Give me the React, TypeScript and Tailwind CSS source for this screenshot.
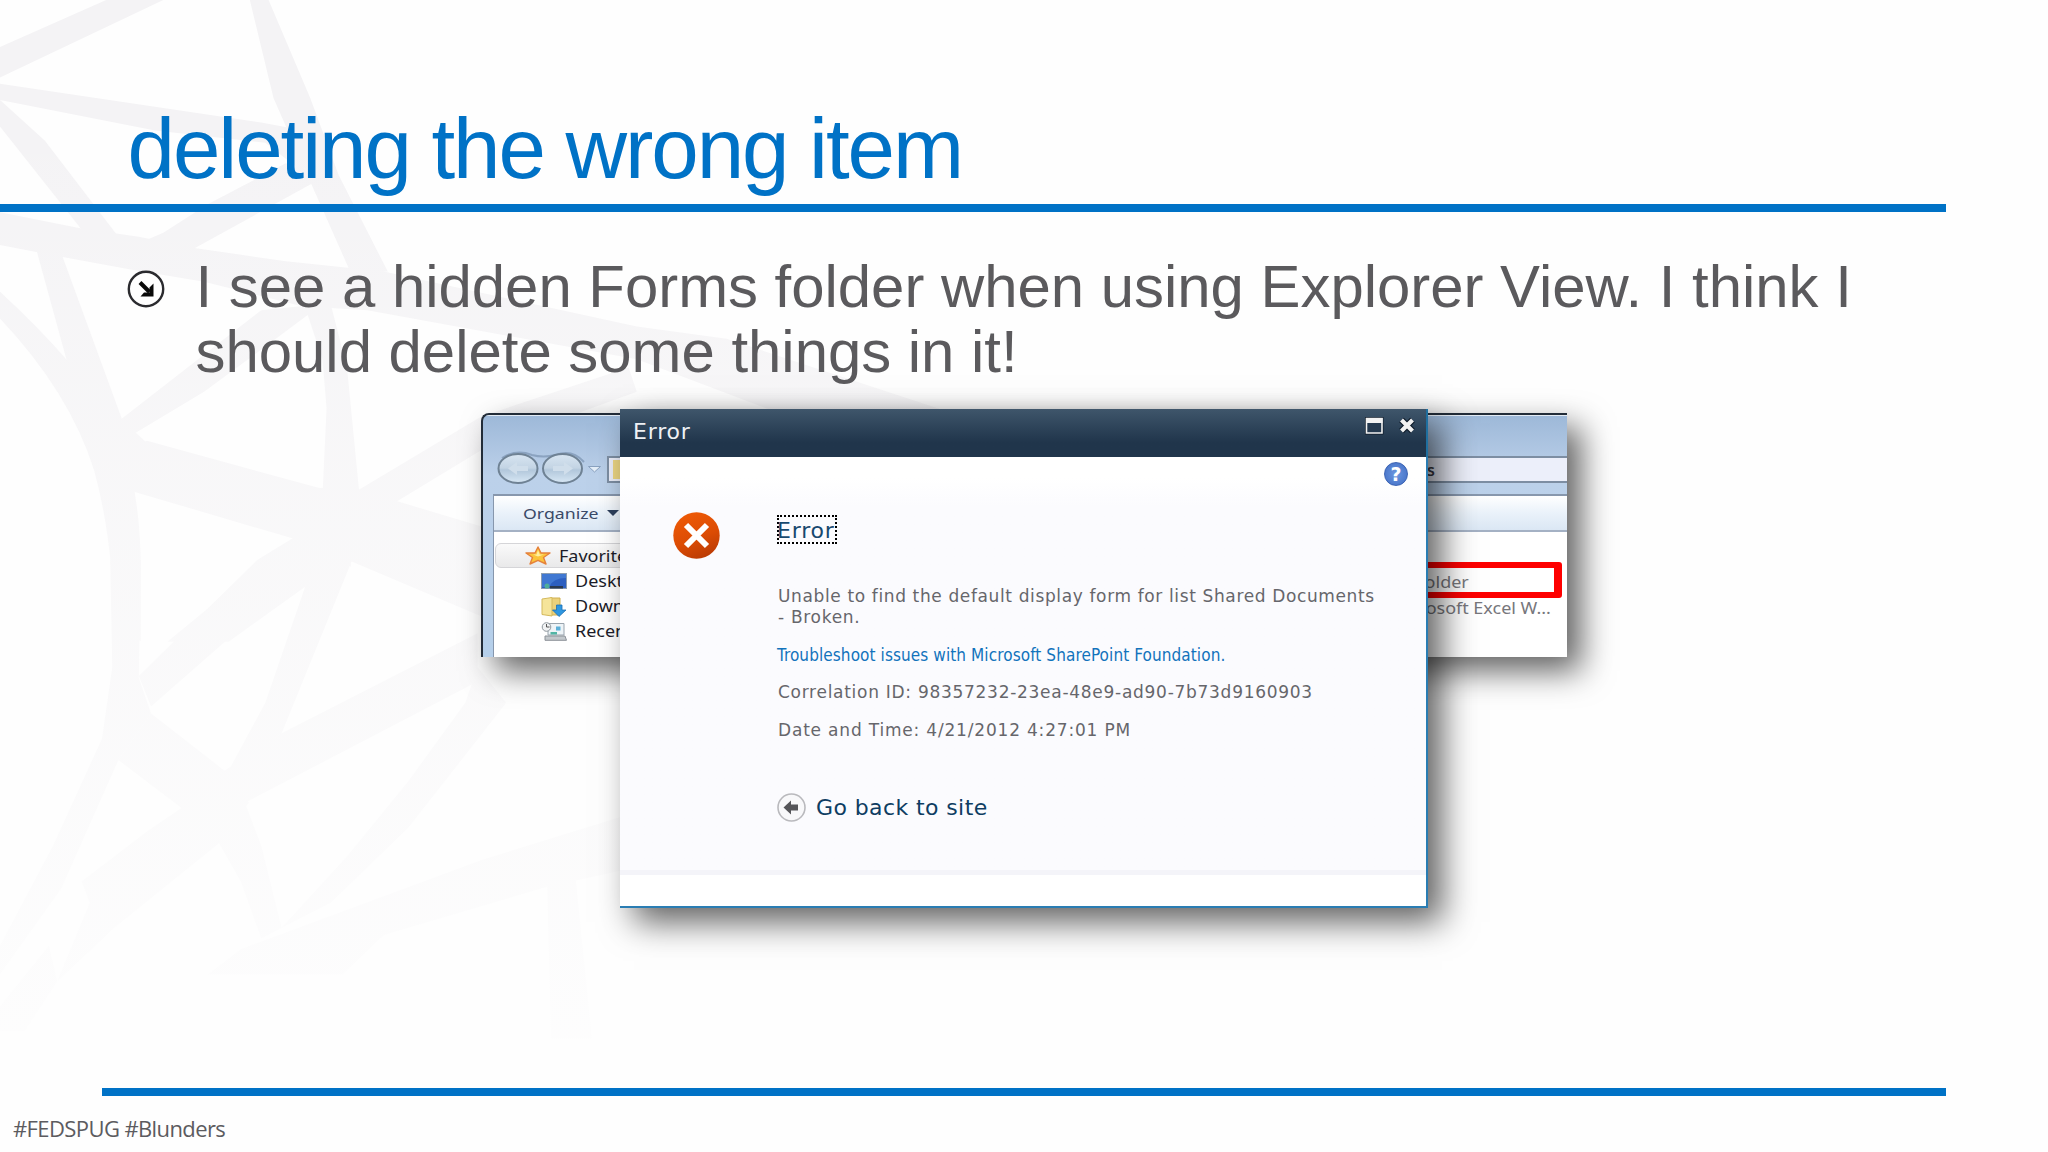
function WebBackdrop() {
  return (
    <svg className="absolute left-0 top-0" width="1000" height="1152" viewBox="0 0 1000 1152">
      <defs>
        <linearGradient id="fade" x1="0" y1="0" x2="0" y2="1">
          <stop offset="0.1" stopColor="#fefefe" stopOpacity="0" />
          <stop offset="0.3" stopColor="#fefefe" stopOpacity="0.25" />
          <stop offset="0.5" stopColor="#fefefe" stopOpacity="0.5" />
          <stop offset="0.7" stopColor="#fefefe" stopOpacity="0.72" />
          <stop offset="0.95" stopColor="#fefefe" stopOpacity="0.95" />
        </linearGradient>
      </defs>
      <g fill="#f4f3f5" transform="scale(0.4082)">
        <path d="M0 115 260 0H400L0 190Z" />
        <path d="M612 0H658L760 240 830 430 950 665 860 670 740 400 670 240Z" />
        <path d="M0 205 640 300 800 330 740 420 650 350 380 320 0 245Z" />
        <path d="M0 245 110 345 290 580 210 575 0 310Z" />
        <path d="M700 400 800 430 470 612 330 600 400 570 510 500Z" />
        <path d="M0 520 200 560 340 580 480 608 700 640 940 665 1560 800 1780 830 2312 1005H1890L1560 880 900 760 740 750 500 690 320 660 130 625 0 600Z" />
        <path d="M90 615 150 620 300 1030 360 1085 230 1150 190 980Z" />
        <path d="M0 715Q190 890 290 1050 345 1200 345 1400V1570H280Q280 1330 230 1150 170 960 0 780Z" />
        <path d="M640 760 790 745 500 960 300 1080 280 1040Z" />
        <path d="M745 745H810L850 900 880 1205 790 1215 800 1000 790 880Z" />
        <path d="M360 1080 780 1195 880 1200 1180 1290V1510L860 1375 720 1320 330 1205 230 1150Z" />
        <path d="M870 1205 1180 1020 1540 900 1560 960 1200 1090 920 1260Z" />
        <path d="M730 1310 870 1350 560 1572H410Z" />
        <path d="M850 1290 860 1390 850 1372 768 1400 740 1380Z" />
      </g>
      <g fill="#f4f3f5" transform="translate(0 560) scale(0.4082 0.3571)">
        <path d="M270 0H345L340 330 370 430 290 560 150 920 0 1160V1080L130 800 250 500 275 300Z" />
        <path d="M630 0 730-70 780 0 370 410 340 325Z" />
        <path d="M770 0 790-50 870-20 690 485 560 590 650 400Z" />
        <path d="M370 430 550 590 610 680 530 790 440 690 290 560Z" />
        <path d="M690 485 1170 205V340L600 680 550 590Z" />
        <path d="M450 690 540 790 280 1030 140 1180 220 960 200 900 360 760Z" />
        <path d="M530 780 600 680 640 800 690 1030 640 1060 590 900Z" />
        <path d="M1170 300 1240 400 1000 750 810 960 690 1030 850 830 1000 620 1140 400Z" />
        <path d="M510 1160 590 1090 1180 840 1520 720V870L1340 915 940 1050 840 1160Z" />
        <path d="M1340 890H1410L1450 1340H1350Z" />
        <path d="M0 1250 120 1080 140 1180 60 1320H0Z" />
      </g>
      <rect width="1000" height="1152" fill="url(#fade)" />
    </svg>
  );
}

function BulletIcon() {
  return (
    <svg className="mt-[16px] size-[38px] shrink-0" viewBox="0 0 38 38" fill="none">
      <circle cx="19" cy="19" r="17.2" fill="#fff" stroke="#2b2b2f" strokeWidth="2.4" />
      <path d="M13 12.500 22.500 22" stroke="#0a0a0a" strokeWidth="4" />
      <path d="M26.500 13.500V26.500H13.500L17 22.500H22.500V17.500Z" fill="#0a0a0a" />
    </svg>
  );
}

function NavButtons() {
  return (
    <svg className="ml-[13px] h-[36px] w-[108px] shrink-0" viewBox="0 0 108 36" fill="none">
      <defs>
        <linearGradient id="glass" x1="0" y1="0" x2="0" y2="1">
          <stop offset="0" stopColor="#d9e6f2" />
          <stop offset="0.48" stopColor="#c3d4e4" />
          <stop offset="0.55" stopColor="#b2c7db" />
          <stop offset="1" stopColor="#d8e8f5" />
        </linearGradient>
      </defs>
      <path d="M6 8Q20-1 36 5 47 8 60 5 76-1 88 12" stroke="#8ba3c0" strokeWidth="2" />
      <ellipse cx="22" cy="18.500" rx="19.500" ry="14.500" fill="url(#glass)" stroke="#6f8294" strokeWidth="2" />
      <ellipse cx="66.500" cy="18.500" rx="19.500" ry="14.500" fill="url(#glass)" stroke="#6f8294" strokeWidth="2" />
      <path d="M12 18.500 21 12V16H32V21H21V25Z" fill="#d0deeb" />
      <path d="M77 18.500 68 12V16H57V21H68V25Z" fill="#d0deeb" />
      <path d="M92.500 16.500H104.500L98.500 22Z" fill="#e4eef8" stroke="#8aa2c0" strokeWidth="1" />
    </svg>
  );
}

function StarIcon() {
  return (
    <svg className="h-[19px] w-[26px]" viewBox="0 0 26 19">
      <path
        d="M13 1 16 7H25L18.500 11.500 21 18 13 14.300 5 18 7.500 11.500 1 7H10Z"
        fill="#fbc43a"
        stroke="#e5813a"
        strokeWidth="1.400"
        strokeLinejoin="round"
      />
      <path d="M13 4 14.800 8.500H19L13 10.500 8 8.500H11.500Z" fill="#fff0a0" />
    </svg>
  );
}

function DesktopIcon() {
  return (
    <svg className="h-[17px] w-[26px]" viewBox="0 0 26 17">
      <rect x="0.500" y="0.500" width="25" height="15" fill="#2c5fc0" stroke="#8c9db0" />
      <path d="M1 1H25V5Q12 5 8 14H1Z" fill="#4078d2" />
      <rect x="9" y="13" width="13" height="2.500" fill="#2a3a50" />
      <circle cx="6" cy="13" r="2.500" fill="#4fae9a" />
    </svg>
  );
}

function DownloadsIcon() {
  return (
    <svg className="h-[20px] w-[26px]" viewBox="0 0 26 20">
      <path d="M9 1H19V18H9Z" fill="#ecd17a" stroke="#cfb050" />
      <path d="M1 2 11 .5V19L1 17.500Z" fill="#f5e49a" stroke="#d4b95c" />
      <path d="M15.500 8H21V13H25L18 19.500 11.500 13H15.500Z" fill="#2f97e0" stroke="#1d6fb4" strokeWidth="0.800" />
    </svg>
  );
}

function RecentIcon() {
  return (
    <svg className="h-[19px] w-[26px]" viewBox="0 0 26 19">
      <path d="M7 1.500H23V13H7Z" fill="#eef4f7" stroke="#9aa5ae" />
      <rect x="15" y="4.500" width="4.500" height="4" fill="#5cb0d8" />
      <rect x="9.500" y="10" width="6.500" height="2.500" fill="#51b5a5" />
      <path d="M4 14H24L25.500 18.300H4Z" fill="#c3c8cc" stroke="#8c9298" />
      <circle cx="5.500" cy="5" r="4.300" fill="#f0f2f3" stroke="#8f979e" />
      <path d="M5.500 2V5H8.500" fill="none" stroke="#555" />
    </svg>
  );
}

const favorites = [
  { label: 'Desktop', Icon: DesktopIcon },
  { label: 'Downloads', Icon: DownloadsIcon },
  { label: 'Recent Places', Icon: RecentIcon },
];

function ExplorerWindow() {
  return (
    <div className="relative ml-[481px] h-[244px] w-[1086px] rounded-tl-lg shadow-[14px_14px_32px_rgba(0,0,0,0.62)]">
      <div className="flex h-full flex-col overflow-hidden rounded-tl-lg border-l-2 border-t-2 border-[#222c38] bg-linear-to-b from-[#9db8d8] from-0% via-[#bcd1ea] via-25% to-[#b5cfea] font-['Noto_Sans'] text-[#1c1c28]">
        <div className="h-px shrink-0 bg-white/70" />
        <div className="flex h-[78px] shrink-0 items-end pb-[8px]">
          <NavButtons />
          <div className="mb-[3px] ml-[3px] flex h-[27px] flex-1 items-center border-2 border-r-0 border-[#7d8ea3] bg-[#eceffa]">
            <div className="ml-1 h-[19px] w-8 bg-[#ecd684]" />
            <div className="ml-[739px] w-[51px] text-right text-[16px] font-semibold leading-none text-[#3a3a44]">
              s
            </div>
          </div>
        </div>
        <div className="ml-[10px] flex flex-1 flex-col border-l border-t-2 border-[#8797ad] bg-white">
          <div className="flex h-[36px] shrink-0 items-center border-b-2 border-[#a4b1c4] bg-linear-to-b from-white via-[#eaf2fa] to-[#dbe7f4]">
            <span className="ml-[29px] w-[74px] origin-left scale-x-[1.180] text-[15px] text-[#3b4a68]">Organize</span>
            <span className="ml-[10px] border-x-[6px] border-t-[6px] border-x-transparent border-t-[#2c3f5c]" />
          </div>
          <div className="flex flex-1 justify-between">
            <div className="w-[200px] pt-[11px]">
              <div className="ml-px flex h-[25px] items-center rounded-l-md border border-[#d5d5d8] bg-linear-to-b from-[#fafafa] to-[#e9e9ea] pl-[29px]">
                <StarIcon />
                <span className="ml-[8px] mt-[2px] origin-left scale-x-[1.160] text-[15.500px]">Favorites</span>
              </div>
              {favorites.map(({ label, Icon }) => (
                <div key={label} className="flex h-[25px] items-center whitespace-nowrap pl-[47px] pt-[2px]">
                  <Icon />
                  <span className="ml-[8px] origin-left scale-x-[1.160] text-[15.500px]">{label}</span>
                </div>
              ))}
            </div>
            <div className="w-[230px] pt-[30px] text-[15.500px] text-[#77777c]">
              <div className="mr-[5px] flex h-[36px] items-center rounded-[3px] border-x-[8px] border-y-[6px] border-[#fe0000] pl-[40px] pt-[4px]">
                <span className="origin-left scale-x-[1.160]">File folder</span>
              </div>
              <div className="-mt-[1px] pl-[52px]">
                <span className="inline-block origin-left scale-x-[1.160] whitespace-nowrap">Microsoft Excel W...</span>
              </div>
            </div>
          </div>
        </div>
      </div>
      <ErrorDialog />
    </div>
  );
}

function ErrorDialog() {
  return (
    <div className="absolute -top-[4px] left-[139px] flex h-[499px] w-[808px] flex-col border-b-2 border-r-2 border-[#2a7db3] bg-white font-['DejaVu_Sans'] shadow-[14px_14px_32px_rgba(0,0,0,0.62)]">
      <div className="-mr-[2px] flex h-[48px] shrink-0 items-start border-r-2 border-[#1f6f9f] bg-linear-to-b from-[#3f566b] to-[#20354b] to-70% pl-[13px] pr-[11px]">
        <span className="flex-1 pt-[8px] text-[22px] leading-[29px] tracking-[0.800px] text-[#eef1f4]">Error</span>
        <svg className="mt-[8px] h-[18px] w-[50px]" viewBox="0 0 50 18">
          <rect x="1.500" y="1.500" width="15.500" height="14.500" fill="none" stroke="#0e1a28" strokeWidth="3" />
          <path d="M1.500 1.500H17V16H1.500Z" fill="#24394f" stroke="#f2f2f2" strokeWidth="1.600" />
          <path d="M1 1H17.500V6H1Z" fill="#f2f2f2" />
          <path d="M36.500 3 47.500 14M47.500 3 36.500 14" stroke="#0e1a28" strokeWidth="6.500" />
          <path d="M36.500 3 47.500 14M47.500 3 36.500 14" stroke="#f2f2f2" strokeWidth="4.200" />
        </svg>
      </div>
      <div className="flex-1 bg-linear-to-b from-white from-5% to-[#fbfbfe] to-12%">
        <div className="flex justify-end pr-[18px] pt-[5px]">
          <div className="flex size-[24px] items-center justify-center rounded-full border border-[#3c64b4] bg-radial from-[#6d98e0] to-[#3f6cc4] text-[19px] font-bold leading-none text-white">
            ?
          </div>
        </div>
        <div className="flex pl-[53px] pt-[26px]">
          <svg className="mr-[58px] size-[47px] shrink-0" viewBox="0 0 47 47">
            <defs>
              <linearGradient id="alert" x1="0.300" y1="0" x2="0.700" y2="1">
                <stop offset="0" stopColor="#ee5a06" />
                <stop offset="0.550" stopColor="#dc4c04" />
                <stop offset="1" stopColor="#b93a04" />
              </linearGradient>
            </defs>
            <circle cx="23.500" cy="23.500" r="23.200" fill="url(#alert)" />
            <path d="M13 13 34 34M34 13 13 34" stroke="#fff" strokeWidth="6" />
          </svg>
          <div className="text-[17px] leading-[21px] text-[#66666b]">
            <h2 className="-ml-px mt-[3px] h-[29px] w-[60px] border-2 border-dotted border-black text-[22px] leading-[27px] tracking-[0.800px] text-[#17486f]">
              <span className="-ml-[2px]">Error</span>
            </h2>
            <p className="mt-[42px]">
              <span className="tracking-[0.630px]">Unable to find the default display form for list Shared Documents</span>
              <br />
              <span className="tracking-[0.700px]">- Broken.</span>
            </p>
            <p className="-ml-px mt-[17px] font-['DejaVu_Sans_Condensed'] tracking-[0.090px] text-[#1273bc]">
              Troubleshoot issues with Microsoft SharePoint Foundation.
            </p>
            <p className="mt-[16px] tracking-[0.720px]">Correlation ID: 98357232-23ea-48e9-ad90-7b73d9160903</p>
            <p className="mt-[17px] tracking-[0.810px]">Date and Time: 4/21/2012 4:27:01 PM</p>
            <div className="mt-[52px] flex items-center text-[22px] leading-[29px] tracking-[0.400px] text-[#0e3d62]">
              <svg className="-ml-px mr-[10px] size-[29px]" viewBox="0 0 29 29">
                <circle cx="14.500" cy="14.500" r="13.500" fill="#f8f8fa" stroke="#b9b9bd" strokeWidth="1.600" />
                <path d="M6.500 14.500 14 7.500V11.500H21V17.500H14V21.500Z" fill="#555559" />
              </svg>
              Go back to site
            </div>
          </div>
        </div>
      </div>
      <div className="h-[36px] shrink-0 border-t-[5px] border-[#f4f4f9] bg-white" />
    </div>
  );
}

export default function App() {
  return (
    <div className="relative h-[1152px] w-[2048px] overflow-hidden bg-[#fefefe]">
      <WebBackdrop />
      <div className="relative flex h-full flex-col font-['Liberation_Sans']">
        <h1 className="pl-[127.500px] pt-[101px] text-[85.330px] leading-[96px] tracking-[-2.080px] text-[#0072c6]">
          deleting the wrong item
        </h1>
        <div className="mt-[7px] h-[8px] w-[1946px] bg-[#0072c6]" />
        <div className="mt-[42px] flex pl-[127px]">
          <BulletIcon />
          <p className="ml-[30.500px] pt-px text-[59.880px] leading-[64.600px] text-[#5b5a5d]">
            I see a hidden Forms folder when using Explorer View. I think I
            <br />
            should delete some things in it!
          </p>
        </div>
        <div className="mt-[29px]">
          <ExplorerWindow />
        </div>
        <div className="mb-[14px] ml-[102px] mt-auto h-[8px] w-[1844px] bg-[#0072c6]" />
        <div className="pb-[5px] pl-[13px] font-['Open_Sans'] text-[22px] leading-[37px] tracking-[-0.600px] text-[#5c5b5f]">
          #FEDSPUG #Blunders
        </div>
      </div>
    </div>
  );
}
